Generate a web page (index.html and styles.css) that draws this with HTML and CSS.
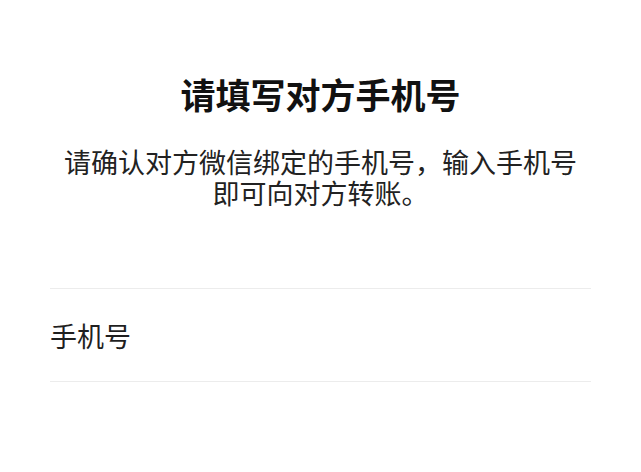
FILE: index.html
```html
<!DOCTYPE html>
<html lang="zh-CN">
<head>
<meta charset="utf-8">
<title>请填写对方手机号</title>
<link rel="stylesheet" href="styles.css">
</head>
<body>
<main class="page">
  <h1 class="title">请填写对方手机号</h1>
  <p class="desc">请确认对方微信绑定的手机号，输入手机号即可向对方转账。</p>
  <label class="field">
    <span class="field-label">手机号</span>
    <input class="field-input" type="tel" aria-label="手机号">
  </label>
</main>
</body>
</html>
```

FILE: styles.css
```css
html, body {
  margin: 0;
  padding: 0;
  background: #ffffff;
}
body {
  font-family: "Noto Sans CJK SC", "Noto Sans", sans-serif;
  color: #1a1a1a;
}
.page {
  display: flex;
  flex-direction: column;
  padding: 70px 50px 0;
}
.title {
  margin: 0;
  font-size: 35px;
  line-height: 48px;
  font-weight: 700;
  text-align: center;
  color: #111111;
}
.desc {
  margin: 28px 0 0;
  padding: 0 10px;
  font-size: 27px;
  line-height: 31px;
  text-align: center;
  color: #222222;
}
.field {
  margin-top: 80px;
  display: flex;
  align-items: center;
  height: 92px;
  border-top: 1px solid #ececec;
  border-bottom: 1px solid #ececec;
}
.field-label {
  font-size: 27px;
  color: #1f1f1f;
  flex: none;
}
.field-input {
  flex: 1;
  min-width: 0;
  border: none;
  outline: none;
  background: transparent;
  font: inherit;
  font-size: 27px;
  margin-left: 24px;
}
```
